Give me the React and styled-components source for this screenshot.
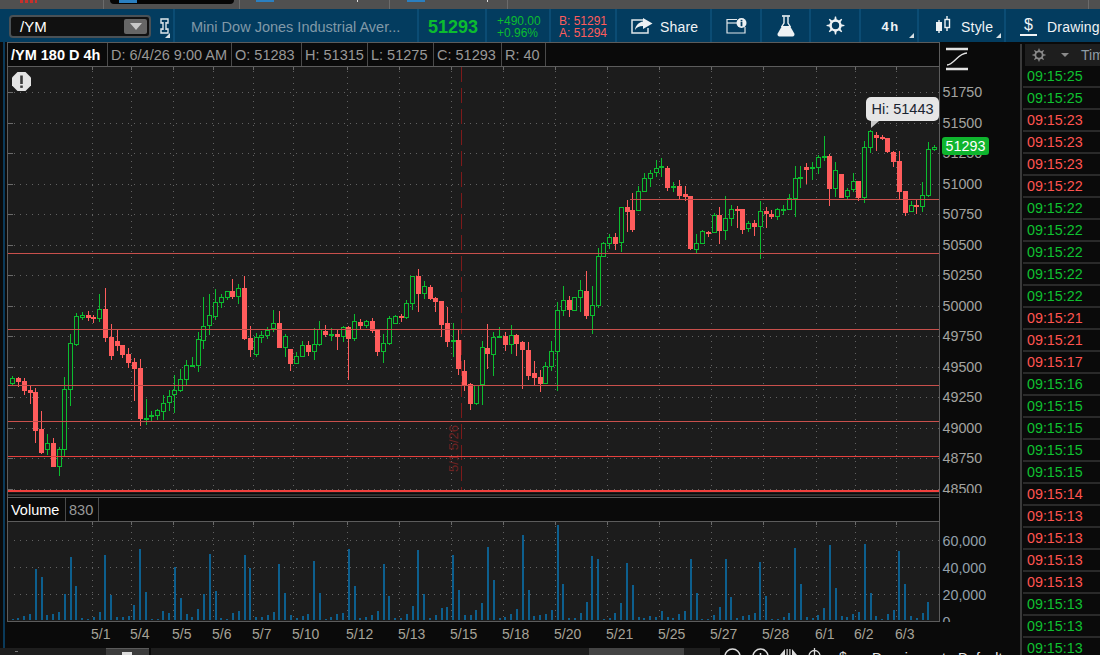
import React from "react";
import styled, { createGlobalStyle } from "styled-components";

const GlobalStyle = createGlobalStyle`
  html, body {
    margin: 0;
    height: 100%;
    background: #0a0a0a;
    overflow: hidden;
  }
  * {
    box-sizing: border-box;
  }
  #root {
    font-family: "Liberation Sans", Arial, sans-serif;
  }
`;

const GREEN = "#0cbc2f";
const RED = "#ff5c5c";
const GRID = "#626262";

// candle rows: [up, bodyTop, bodyBottom, wickTop, wickBottom], read at 3x from the base y
const zoomed = (base, rows) =>
  rows.map(([up, a, b, c, d]) => [up, base + a / 3, base + b / 3, base + c / 3, base + d / 3]);

const candles = [
  ...zoomed(270, [
    [1, 325, 342, 318, 346], [0, 324, 335, 321, 350], [0, 333, 362, 325, 375], [0, 360, 369, 348, 402],
    [0, 366, 483, 354, 519], [0, 477, 549, 423, 552], [1, 520, 540, 492, 555], [0, 519, 591, 504, 591],
    [1, 538, 590, 531, 617], [1, 358, 540, 321, 558], [1, 220, 359, 192, 408], [1, 139, 224, 129, 228],
    [1, 136, 143, 126, 151], [0, 135, 144, 123, 153], [0, 141, 147, 135, 159], [1, 118, 146, 72, 156],
    [0, 117, 204, 54, 216], [0, 201, 258, 162, 270], [0, 213, 228, 180, 243], [0, 225, 255, 225, 264],
    [0, 252, 279, 234, 294], [0, 276, 297, 264, 393], [0, 294, 447, 267, 468], [1, 444, 450, 387, 465],
    [1, 435, 440, 423, 454], [1, 420, 438, 417, 450], [1, 400, 426, 376, 450], [1, 379, 399, 360, 423],
    [1, 360, 376, 315, 429], [1, 328, 363, 297, 366], [1, 286, 330, 270, 345], [1, 286, 290, 262, 292],
    [1, 208, 288, 186, 306], [1, 168, 212, 81, 237], [1, 136, 168, 72, 195], [1, 97, 140, 57, 150],
    [1, 82, 98, 72, 114], [1, 64, 84, 64, 90], [0, 64, 81, 27, 87], [1, 55, 80, 42, 102],
    [0, 54, 207, 18, 210], [0, 204, 240, 168, 261], [1, 202, 255, 189, 261], [1, 196, 204, 183, 219],
    [1, 179, 197, 171, 207], [1, 160, 178, 120, 186], [0, 159, 234, 123, 234], [1, 199, 233, 192, 261],
    [0, 237, 282, 237, 303], [1, 259, 282, 246, 282], [1, 226, 261, 213, 261], [0, 225, 246, 213, 258],
    [1, 223, 246, 174, 270], [1, 177, 225, 153, 228],
  ]),
  ...zoomed(240, [
    [0, 273, 285, 255, 291], [1, 283, 288, 264, 303], [0, 282, 291, 267, 330], [1, 262, 290, 258, 306],
    [0, 261, 297, 258, 420], [1, 244, 297, 222, 303], [0, 246, 258, 237, 270], [1, 244, 258, 240, 264],
    [0, 243, 273, 234, 279], [0, 270, 336, 267, 348], [1, 310, 335, 282, 369], [1, 235, 312, 228, 315],
    [1, 229, 252, 225, 252], [0, 228, 234, 222, 246], [1, 190, 234, 180, 237], [1, 109, 191, 108, 210],
    [0, 108, 162, 87, 216], [1, 138, 162, 123, 177], [0, 141, 178, 135, 180], [0, 174, 186, 171, 216],
    [0, 183, 255, 183, 291], [0, 249, 306, 201, 321], [1, 300, 305, 249, 351], [0, 300, 387, 270, 405],
    [0, 393, 436, 360, 453], [0, 432, 492, 429, 510], [1, 436, 491, 436, 495], [1, 322, 436, 303, 495],
    [0, 324, 342, 252, 387], [1, 292, 345, 276, 408], [1, 289, 293, 261, 294], [0, 288, 315, 276, 333],
    [1, 286, 315, 255, 342], [0, 285, 312, 282, 348], [0, 306, 330, 303, 447], [0, 330, 408, 306, 420],
    [0, 399, 414, 363, 435], [0, 411, 432, 390, 456], [1, 379, 432, 366, 432], [1, 334, 380, 303, 393],
    [1, 211, 335, 186, 453], [1, 181, 213, 138, 228], [0, 180, 210, 168, 231], [1, 172, 213, 172, 213],
    [1, 151, 174, 120, 216], [0, 153, 228, 93, 237], [1, 196, 227, 138, 282], [1, 48, 197, 24, 204],
  ]),
  ...zoomed(100, [
    [1, 430, 470, 425, 472], [1, 412, 431, 403, 447], [0, 411, 431, 400, 450], [1, 322, 430, 322, 456],
    [0, 322, 335, 300, 396], [0, 331, 390, 280, 396], [1, 274, 332, 258, 332], [1, 235, 275, 220, 275],
    [1, 220, 236, 210, 260], [1, 205, 219, 180, 231], [1, 199, 205, 175, 232], [0, 204, 264, 197, 273],
    [1, 258, 262, 245, 275], [0, 258, 288, 240, 296], [0, 282, 291, 258, 303], [0, 288, 446, 288, 450],
    [1, 428, 450, 403, 459], [1, 393, 431, 390, 433], [0, 396, 401, 392, 411], [1, 346, 398, 340, 400],
    [0, 345, 393, 322, 432], [1, 355, 392, 288, 420], [1, 328, 356, 315, 378], [0, 327, 332, 318, 384],
    [0, 327, 390, 327, 402], [1, 370, 386, 364, 396], [0, 369, 381, 360, 408], [1, 334, 380, 303, 477],
    [0, 334, 342, 322, 384], [0, 342, 351, 330, 357], [1, 328, 350, 324, 360], [1, 327, 331, 315, 345],
    [1, 295, 329, 282, 330], [1, 235, 296, 198, 350], [1, 232, 236, 198, 264], [0, 201, 209, 189, 252],
    [1, 202, 206, 186, 240], [1, 172, 203, 165, 222], [1, 169, 174, 108, 183], [0, 168, 267, 162, 318],
    [1, 211, 266, 186, 291], [0, 222, 294, 222, 294], [1, 270, 290, 264, 297], [1, 244, 270, 219, 275],
    [0, 243, 294, 243, 303], [1, 142, 294, 123, 309], [1, 94, 143, 90, 160], [0, 106, 114, 96, 153],
    [0, 112, 116, 105, 120], [0, 114, 156, 114, 160], [0, 156, 186, 153, 201], [0, 183, 276, 153, 297],
    [0, 273, 339, 273, 348], [1, 316, 335, 303, 336], [0, 315, 320, 300, 343], [1, 286, 320, 247, 336],
    [1, 148, 288, 126, 291], [1, 142, 149, 135, 153],
  ]),
];

// volume bar tops, read at 3x, bar foot is at 378
const volumeTops = [
  376, 373, 366, 360, 225, 249, 363, 360, 354, 300, 189, 276, 372, 376, 369, 354, 183, 303, 369, 369,
  366, 333, 165, 294, 375, 375, 351, 357, 219, 312, 360, 369, 345, 300, 180, 291, 372, 375, 357, 351,
  183, 222, 369, 369, 363, 354, 210, 297, 363, 372, 366, 360, 201, 297, 375, 369, 360, 357, 165, 276,
  372, 369, 363, 351, 210, 306, 372, 372, 360, 336, 168, 300, 372, 363, 342, 339, 183, 288, 363, 363,
  348, 327, 159, 258, 372, 369, 360, 345, 123, 288, 366, 363, 360, 348, 93, 270, 372, 372, 357, 324,
  186, 195, 375, 372, 357, 327, 207, 273, 369, 372, 366, 369, 351, 369, 372, 360, 351, 195, 297, 376,
  376, 363, 339, 195, 309, 372, 366, 363, 357, 204, 306, 376, 376, 369, 357, 162, 270, 369, 372, 363,
  342, 153, 282, 366, 369, 360, 354, 150, 297, 366, 376, 360, 348, 171, 270, 366, 372, 357, 324, 377,
];

const candleX = (i) => Math.round(12.2 + i * 5.796);
const volumeX = (i) => Math.round(11.7 + i * 5.796);

const ticks = [
  [92, "5/1"], [131, "5/4"], [173, "5/5"], [213, "5/6"], [253, "5/7"], [293, "5/10"],
  [347, "5/12"], [399, "5/13"], [451, "5/15"], [503, "5/18"], [555, "5/20"], [607, "5/21"],
  [659, "5/25"], [711, "5/27"], [763, "5/28"], [816, "6/1"], [855, "6/2"], [896, "6/3"],
];

const priceLabels = [51750, 51500, 51250, 51000, 50750, 50500, 50250, 50000, 49750, 49500, 49250, 49000, 48750, 48500];

const levels = [
  { y: 199.5, from: 630, color: "#c9504c" },
  { y: 253.5, from: 8, color: "#c9504c" },
  { y: 329.5, from: 8, color: "#c9504c" },
  { y: 385.5, from: 8, color: "#c9504c" },
  { y: 421.5, from: 8, color: "#c9504c" },
  { y: 456.5, from: 8, color: "#e5403d" },
  { y: 491, from: 8, color: "#f0403d", w: 2 },
];

const trades = [
  ["25", 1], ["25", 1], ["23", 0], ["23", 0], ["23", 0], ["22", 0], ["22", 1], ["22", 1], ["22", 1],
  ["22", 1], ["22", 1], ["21", 0], ["21", 0], ["17", 0], ["16", 1], ["15", 1], ["15", 1], ["15", 1],
  ["15", 1], ["14", 0], ["13", 0], ["13", 0], ["13", 0], ["13", 0], ["13", 1], ["13", 1], ["13", 1],
];

const PriceChart = () => (
  <ChartSvg viewBox="8 67 931 426" width="931" height="426">
    <g stroke={GRID} strokeWidth="1" strokeDasharray="1 5" shapeRendering="crispEdges">
      {priceLabels.map((_, i) => {
        const y = Math.round(92 + i * 30.5) + 0.5;
        return <line key={i} x1="14" x2="939" y1={y} y2={y} />;
      })}
      {ticks.map(([x]) => (
        <line key={x} x1={x + 0.5} x2={x + 0.5} y1="71" y2="493" />
      ))}
    </g>
    <g fill="#6a6a6a" shapeRendering="crispEdges">
      {priceLabels.map((_, i) => (
        <rect key={i} x="8" y={Math.round(92 + i * 30.5)} width="5" height="1" />
      ))}
      {ticks.map(([x]) => (
        <rect key={x} x={x} y="67" width="1" height="3" />
      ))}
    </g>

    <line x1="461.5" x2="461.5" y1="67" y2="490" stroke="#7d1a1a" strokeDasharray="15 6" strokeWidth="1" />
    <text
      transform="rotate(-90 458 472)"
      x="458"
      y="472"
      fill="#6e2222"
      fontSize="13"
      fontFamily="Liberation Sans, Arial, sans-serif"
    >
      5/1 5/26
    </text>

    <g shapeRendering="crispEdges">
      {candles.map(([up, top, bottom, wickTop, wickBottom], i) => {
        const x = candleX(i);
        const color = up ? GREEN : RED;
        return (
          <g key={i}>
            <rect x={x} y={wickTop} width="1" height={wickBottom - wickTop} fill={color} />
            {up ? (
              <rect x={x - 1.5} y={top + 0.5} width="4" height={Math.max(bottom - top - 1, 1)} fill="#1c1c1c" stroke={color} />
            ) : (
              <rect x={x - 2} y={top} width="5" height={Math.max(bottom - top, 2)} fill={color} />
            )}
          </g>
        );
      })}
      {levels.map((l) => (
        <line key={l.y} x1={l.from} x2="939" y1={l.y} y2={l.y} stroke={l.color} strokeWidth={l.w || 1} />
      ))}
    </g>

    <polygon points="17.5,72 25.5,72 31,77.5 31,85.5 25.5,91 17.5,91 12,85.5 12,77.5" fill="#e4e4e4" />
    <rect x="20.2" y="75.5" width="2.6" height="8.5" fill="#3a3a3a" />
    <rect x="20.2" y="85.5" width="2.6" height="2.4" fill="#3a3a3a" />
  </ChartSvg>
);

const VolumeChart = () => (
  <ChartSvg viewBox="8 523 931 99" width="931" height="99">
    <g stroke={GRID} strokeWidth="1" strokeDasharray="1 5" shapeRendering="crispEdges">
      {[541, 568, 595].map((y) => (
        <line key={y} x1="14" x2="939" y1={y + 0.5} y2={y + 0.5} />
      ))}
      {ticks.map(([x]) => (
        <line key={x} x1={x + 0.5} x2={x + 0.5} y1="527" y2="622" />
      ))}
    </g>
    <g fill="#6a6a6a" shapeRendering="crispEdges">
      {ticks.map(([x]) => (
        <rect key={x} x={x} y="523" width="1" height="3" />
      ))}
    </g>
    <g fill="#0d5f8e" shapeRendering="crispEdges">
      {volumeTops.map((top, i) => (
        <rect key={i} x={volumeX(i)} y={495 + top / 3} width="2" height={(378 - top) / 3} />
      ))}
    </g>
  </ChartSvg>
);

const DateAxis = () => (
  <ChartSvg viewBox="8 622 931 26" width="931" height="26">
    {ticks.map(([x, label]) => (
      <text key={x} x={x - 1} y="638.5" fill="#a6a398" fontSize="14" fontFamily="Liberation Sans, Arial, sans-serif">
        {label}
      </text>
    ))}
  </ChartSvg>
);

const GearIcon = ({ size = 19, color = "#eef2f4" }) => (
  <svg width={size} height={size} viewBox="0 0 20 20">
    {[0, 45, 90, 135, 180, 225, 270, 315].map((a) => (
      <path key={a} d="M8.4 5.5L9.4 0.6H10.6L11.6 5.5Z" fill={color} transform={`rotate(${a} 10 10)`} />
    ))}
    <circle cx="10" cy="10" r="5.2" fill="none" stroke={color} strokeWidth="2.6" />
  </svg>
);

const App = () => (
  <Page>
    <GlobalStyle />
    <TabStrip>
      <Tab $w={104} $pad={20}>
        <RedMark />
      </Tab>
      <Tab $w={136} $pad={6}>
        <ActiveTab>
          <TabGlyph $w={18} $h={3} />
        </ActiveTab>
      </Tab>
      <Tab $w={150} $pad={16}>
        <TabGlyph $w={18} $h={2} />
        <TabTick $right={31} />
      </Tab>
      <Tab $w={118} $pad={17}>
        <TabGlyph $w={18} $h={2} />
        <TabTick $right={19} />
      </Tab>
      <Tab $w={581} $pad={0} />
    </TabStrip>

    <Toolbar>
      <ToolCell $w={175} $pad={9} $start>
        <SymbolBox>
          /YM
          <SymbolDrop>
            <svg width="12" height="7" viewBox="0 0 12 7">
              <path d="M0 0H12L6 7Z" fill="#c8c8c8" />
            </svg>
          </SymbolDrop>
        </SymbolBox>
        <LinkIcon>
          <svg width="9" height="16" viewBox="0 0 9 16" fill="none" stroke="#dfe6ea" strokeWidth="1.4">
            <path d="M3 5H1V1H8V5H6" />
            <path d="M3 11H1V15H8V11H6" />
            <path d="M3 4V12M6 4V12" />
          </svg>
        </LinkIcon>
        <Corner />
      </ToolCell>
      <ToolCell $w={244} $pad={16} $start>
        <InstrumentName>Mini Dow Jones Industrial Aver...</InstrumentName>
      </ToolCell>
      <ToolCell $w={68} $pad={9} $start>
        <LastPrice>51293</LastPrice>
      </ToolCell>
      <ToolCell $w={64} $pad={10} $start>
        <QuoteLines $color={GREEN}>
          <span>+490.00</span>
          <span>+0.96%</span>
        </QuoteLines>
      </ToolCell>
      <ToolCell $w={66} $pad={8} $start>
        <QuoteLines $color={RED}>
          <span>B: 51291</span>
          <span>A: 51294</span>
        </QuoteLines>
      </ToolCell>
      <ToolCell $w={95} $pad={14} $start>
        <svg width="22" height="16" viewBox="0 0 22 16" fill="none">
          <path d="M12 2H1V15H17V10" stroke="#dfe6ea" strokeWidth="1.5" />
          <path d="M12 0L21.5 5.5L12 11V8C8 8 6 9 4 12C4.5 7.5 8 4 12 3.5Z" fill="#eef2f4" />
        </svg>
        <ToolLabel $gap={7}>Share</ToolLabel>
      </ToolCell>
      <ToolCell $w={50}>
        <svg width="21" height="16" viewBox="0 0 21 16" fill="none">
          <path d="M11 1.5H1V15H19V9" stroke="#dfe6ea" strokeWidth="1.2" />
          <path d="M1 5H11" stroke="#dfe6ea" strokeWidth="1.2" />
          <circle cx="15.5" cy="5" r="5" fill="#eef2f4" />
          <rect x="14.6" y="4" width="1.8" height="4.2" fill="#033c5f" />
          <rect x="14.6" y="1.8" width="1.8" height="1.6" fill="#033c5f" />
        </svg>
      </ToolCell>
      <ToolCell $w={49}>
        <svg width="18" height="22" viewBox="0 0 18 22" fill="none">
          <path d="M5 1H13" stroke="#eef2f4" strokeWidth="1.6" />
          <path d="M7 1.5V8L4.5 12M11 1.5V8L13.5 12" stroke="#eef2f4" strokeWidth="1.4" />
          <path d="M5 11H13L17.3 18.5C18 20 17 21.5 15.5 21.5H2.5C1 21.5 0 20 0.7 18.5Z" fill="#eef2f4" />
        </svg>
      </ToolCell>
      <ToolCell $w={50}>
        <GearIcon />
      </ToolCell>
      <ToolCell $w={58}>
        <Aggregation>4h</Aggregation>
        <Corner />
      </ToolCell>
      <ToolCell $w={87} $pad={17} $start>
        <svg width="15" height="19" viewBox="0 0 15 19" fill="none" stroke="#eef2f4">
          <path d="M3 4V17M11 0V15" strokeWidth="1.4" />
          <rect x="0.5" y="6.5" width="5" height="8" fill="#eef2f4" />
          <rect x="9" y="3.5" width="4.5" height="8" fill="#033c5f" strokeWidth="1.4" />
        </svg>
        <ToolLabel $gap={10}>Style</ToolLabel>
        <Corner />
      </ToolCell>
      <ToolCell $w={94} $pad={14} $start $last>
        <DollarLine>$</DollarLine>
        <ToolLabel $gap={10}>Drawings</ToolLabel>
      </ToolCell>
    </Toolbar>

    <Workspace>
      <MainColumn>
        <ChartRow>
          <Rail />
          <ChartColumn>
            <StudyHeader>
              <HeaderCell $w={100} $bright>/YM 180 D 4h</HeaderCell>
              <HeaderCell $w={124}>D: 6/4/26 9:00 AM</HeaderCell>
              <HeaderCell $w={70}>O: 51283</HeaderCell>
              <HeaderCell $w={66}>H: 51315</HeaderCell>
              <HeaderCell $w={66}>L: 51275</HeaderCell>
              <HeaderCell $w={68}>C: 51293</HeaderCell>
              <HeaderCell $w={44}>R: 40</HeaderCell>
            </StudyHeader>
            <PricePane>
              <PriceChart />
              <HighTip>Hi: 51443</HighTip>
            </PricePane>
            <PaneGap />
            <VolumeHeader>
              <VolumeCell $w={58} $bright>Volume</VolumeCell>
              <VolumeCell $w={33}>830</VolumeCell>
            </VolumeHeader>
            <VolumePane>
              <VolumeChart />
            </VolumePane>
            <DateRow>
              <DateAxis />
            </DateRow>
          </ChartColumn>
          <AxisColumn>
            <PriceAxis>
              <StudyButton>
                <svg width="22" height="24" viewBox="0 0 22 24" fill="none" stroke="#e2e2e2">
                  <path d="M0 2H22M0 22H22" strokeWidth="2.4" />
                  <path d="M1 18C8 18 12 6 21 6" strokeWidth="1.3" />
                </svg>
              </StudyButton>
              {priceLabels.map((p) => (
                <AxisLabel key={p} $h={30.5}>{p}</AxisLabel>
              ))}
              <PriceTag>51293</PriceTag>
            </PriceAxis>
            <VolumeAxis>
              {["60,000", "40,000", "20,000", "0"].map((v) => (
                <AxisLabel key={v} $h={27} $cool>{v}</AxisLabel>
              ))}
            </VolumeAxis>
          </AxisColumn>
        </ChartRow>
        <BottomBar>
          <Track $w={106}>
            <TrackMark />
          </Track>
          <ScrollButton>
            <ScrollButtonMark />
          </ScrollButton>
          <Track $w={438} />
          <ScrollThumb />
          <Track $w={36} />
          <BottomTools>
            <CircleTool $w={28}>
              <svg width="17" height="17" viewBox="0 0 17 17" fill="none" stroke="#dcdcdc" strokeWidth="1.5">
                <circle cx="8.5" cy="8.5" r="7.5" />
                <path d="M5 8.5H12" />
              </svg>
            </CircleTool>
            <CircleTool $w={28}>
              <svg width="17" height="17" viewBox="0 0 17 17" fill="none" stroke="#dcdcdc" strokeWidth="1.5">
                <circle cx="8.5" cy="8.5" r="7.5" />
                <path d="M5 8.5H12M8.5 5V12" />
              </svg>
            </CircleTool>
            <CircleTool $w={27}>
              <svg width="17" height="15" viewBox="0 0 17 15" fill="#dcdcdc">
                <path d="M0 7L5 1V13ZM17 7L12 1V13Z" />
                <rect x="6.5" y="1" width="1.2" height="12" />
                <rect x="9.3" y="1" width="1.2" height="12" />
              </svg>
            </CircleTool>
            <CircleTool $w={27}>
              <svg width="15" height="15" viewBox="0 0 15 15" fill="none" stroke="#dcdcdc" strokeWidth="1.3">
                <circle cx="7.5" cy="8" r="5.5" />
                <path d="M7.5 0V15M0 8H15" />
              </svg>
            </CircleTool>
            <BottomDollar>$</BottomDollar>
            <BottomText $w={86}>Drawing set:</BottomText>
            <BottomText $w={50}>Default</BottomText>
          </BottomTools>
        </BottomBar>
      </MainColumn>
      <TimeSales>
        <SalesHeader>
          <GearIcon size={14} color="#8a8a8a" />
          <SalesCaret />
          <SalesTitle>Time</SalesTitle>
        </SalesHeader>
        {trades.map(([sec, up], i) => (
          <SalesRow key={i} $up={up}>09:15:{sec}</SalesRow>
        ))}
      </TimeSales>
    </Workspace>
  </Page>
);

export default App;

const Page = styled.div`
  width: 1100px;
  height: 655px;
  display: flex;
  flex-direction: column;
  overflow: hidden;
  background: #0a0a0a;
`;

const TabStrip = styled.div`
  height: 9px;
  flex: none;
  display: flex;
  background: #505050;
`;

const Tab = styled.div`
  width: ${(p) => p.$w}px;
  padding-left: ${(p) => p.$pad}px;
  border-right: 1px solid #6b6b6b;
  display: flex;
  align-items: flex-start;
  position: relative;
`;

const RedMark = styled.div`
  width: 17px;
  height: 3px;
  background: repeating-linear-gradient(90deg, #c8302c 0 3px, #505050 3px 5px);
`;

const ActiveTab = styled.div`
  width: 124px;
  height: 4px;
  padding-left: 9px;
  background: #050505;
  border-radius: 0 0 5px 5px;
`;

const TabGlyph = styled.div`
  width: ${(p) => p.$w}px;
  height: ${(p) => p.$h}px;
  background: #2a7fc0;
`;

const TabTick = styled.div`
  position: absolute;
  top: 0;
  right: ${(p) => p.$right}px;
  width: 1px;
  height: 2px;
  background: #e0e0e0;
`;

const Toolbar = styled.div`
  height: 33px;
  flex: none;
  display: flex;
  background: #033c5f;
`;

const ToolCell = styled.div`
  width: ${(p) => p.$w}px;
  flex: none;
  padding-left: ${(p) => p.$pad || 0}px;
  display: flex;
  align-items: center;
  justify-content: ${(p) => (p.$start ? "flex-start" : "center")};
  border-right: ${(p) => (p.$last ? "none" : "2px solid #0b4c74")};
  position: relative;
  overflow: hidden;
  white-space: nowrap;
`;

const SymbolBox = styled.div`
  width: 142px;
  height: 23px;
  margin-top: 2px;
  padding-left: 9px;
  display: flex;
  flex: none;
  align-items: center;
  justify-content: space-between;
  background: #111;
  border: 2px solid #4a5156;
  border-radius: 4px;
  color: #fff;
  font-size: 15px;
`;

const SymbolDrop = styled.div`
  width: 23px;
  height: 15px;
  margin-right: 2px;
  display: flex;
  align-items: center;
  justify-content: center;
  background: #666;
  border-radius: 2px;
`;

const LinkIcon = styled.div`
  margin-left: 9px;
  display: flex;
  flex: none;
`;

const Corner = styled.div`
  position: absolute;
  right: 3px;
  bottom: 4px;
  width: 5px;
  height: 5px;
  background: #d8e0e4;
  clip-path: polygon(100% 0, 100% 100%, 0 100%);
`;

const InstrumentName = styled.span`
  margin-top: 2px;
  color: #8199a8;
  font-size: 14.5px;
`;

const LastPrice = styled.span`
  margin-top: 3px;
  color: ${GREEN};
  font-size: 18px;
  font-weight: bold;
`;

const QuoteLines = styled.div`
  margin-top: 2px;
  display: flex;
  flex-direction: column;
  color: ${(p) => p.$color};
  font-size: 12px;
  line-height: 12px;
`;

const ToolLabel = styled.span`
  margin-top: 2px;
  margin-left: ${(p) => p.$gap}px;
  color: #f0f3f5;
  font-size: 14px;
  letter-spacing: 0.2px;
`;

const Aggregation = styled.span`
  margin: 2px 0 0 3px;
  color: #f0f3f5;
  font-size: 13px;
  font-weight: bold;
  letter-spacing: 1.5px;
`;

const DollarLine = styled.span`
  width: 17px;
  height: 20px;
  flex: none;
  text-align: center;
  color: #f0f3f5;
  font-size: 16px;
  line-height: 17px;
  border-bottom: 2px solid #f0f3f5;
`;

const Workspace = styled.div`
  flex: 1;
  display: flex;
  min-height: 0;
`;

const MainColumn = styled.div`
  width: 1020px;
  flex: none;
  display: flex;
  flex-direction: column;
`;

const ChartRow = styled.div`
  height: 606px;
  flex: none;
  display: flex;
`;

const Rail = styled.div`
  width: 7px;
  flex: none;
  background: linear-gradient(90deg, #0a0a0a 0 3px, #0a3a5a 3px 5px, #0a0a0a 5px);
`;

const ChartColumn = styled.div`
  width: 933px;
  flex: none;
  display: flex;
  flex-direction: column;
  border-left: 1px solid #5c5c5c;
  border-right: 1px solid #5c5c5c;
`;

const StudyHeader = styled.div`
  height: 25px;
  flex: none;
  display: flex;
  background: #0a0a0a;
  border-top: 1px solid #5c5c5c;
  border-bottom: 1px solid #5c5c5c;
`;

const HeaderCell = styled.div`
  width: ${(p) => p.$w}px;
  flex: none;
  padding-left: 3px;
  display: flex;
  align-items: center;
  border-right: 1px solid #4a4a4a;
  color: ${(p) => (p.$bright ? "#fff" : "#989898")};
  font-size: 14.5px;
  font-weight: ${(p) => (p.$bright ? "bold" : "normal")};
  white-space: nowrap;
`;

const PricePane = styled.div`
  height: 426px;
  flex: none;
  position: relative;
  background: #1c1c1c;
  overflow: hidden;
`;

const ChartSvg = styled.svg`
  display: block;
`;

const HighTip = styled.div`
  position: absolute;
  left: 858px;
  top: 30px;
  width: 73px;
  height: 24px;
  display: flex;
  align-items: center;
  justify-content: center;
  background: #e6e6e6;
  border-radius: 5px;
  color: #1a2430;
  font-size: 14.5px;

  &::after {
    content: "";
    position: absolute;
    left: 5px;
    top: 24px;
    width: 8px;
    height: 7px;
    background: #c8c8c8;
    clip-path: polygon(0 0, 100% 0, 0 100%);
  }
`;

const PaneGap = styled.div`
  height: 5px;
  flex: none;
  background: linear-gradient(180deg, #0a0a0a 0 1px, #2e2e2e 1px 3px, #0a0a0a 3px);
  border-bottom: 1px solid #5c5c5c;
`;

const VolumeHeader = styled.div`
  height: 24px;
  flex: none;
  display: flex;
  background: #0a0a0a;
  border-bottom: 1px solid #5c5c5c;
`;

const VolumeCell = styled.div`
  width: ${(p) => p.$w}px;
  flex: none;
  padding-left: 3px;
  display: flex;
  align-items: center;
  border-right: 1px solid #4a4a4a;
  color: ${(p) => (p.$bright ? "#fff" : "#989898")};
  font-size: 14.5px;
`;

const VolumePane = styled.div`
  height: 100px;
  flex: none;
  background: #1c1c1c;
  border-bottom: 1px solid #5c5c5c;
  overflow: hidden;
`;

const DateRow = styled.div`
  height: 26px;
  flex: none;
  margin: 0 -1px;
  padding-left: 1px;
  background: #0a0a0a;
`;

const AxisColumn = styled.div`
  width: 80px;
  flex: none;
  display: flex;
  flex-direction: column;
  background: #0a0a0a;
`;

const PriceAxis = styled.div`
  height: 451px;
  flex: none;
  position: relative;
  overflow: hidden;
`;

const StudyButton = styled.div`
  height: 34.75px;
  padding: 5px 0 0 6px;
  display: flex;
  align-items: flex-start;
`;

const AxisLabel = styled.div`
  height: ${(p) => p.$h}px;
  padding-left: 2.5px;
  display: flex;
  align-items: center;
  color: ${(p) => (p.$cool ? "#93a0aa" : "#a3a3a0")};
  font-size: 14.3px;
`;

const PriceTag = styled.div`
  position: absolute;
  left: 2px;
  top: 95px;
  width: 47px;
  height: 18px;
  display: flex;
  align-items: center;
  justify-content: center;
  background: #0fb52e;
  border-radius: 3px;
  color: #fff;
  font-size: 14.3px;
`;

const VolumeAxis = styled.div`
  height: 129px;
  flex: none;
  padding-top: 34.5px;
  overflow: hidden;
`;

const BottomBar = styled.div`
  height: 7px;
  flex: none;
  display: flex;
  align-items: flex-start;
  overflow: hidden;
`;

const Track = styled.div`
  width: ${(p) => p.$w}px;
  height: 7px;
  flex: none;
  padding: 3px 0 0 15px;
  background: #1e1e1e;
`;

const TrackMark = styled.div`
  width: 3px;
  height: 1px;
  background: #777;
`;

const ScrollButton = styled.div`
  width: 43px;
  height: 7px;
  margin: 0 2px 0 0;
  flex: none;
  padding: 3px 0 0 16px;
  background: #3c3c3c;
  border-top: 1px solid #5a5a5a;
`;

const ScrollButtonMark = styled.div`
  width: 10px;
  height: 3px;
  background: #ddd;
`;

const ScrollThumb = styled.div`
  width: 95px;
  height: 7px;
  flex: none;
  background: #444;
`;

const BottomTools = styled.div`
  margin-left: 4px;
  flex: none;
  display: flex;
  align-items: flex-start;
`;

const CircleTool = styled.div`
  width: ${(p) => p.$w}px;
  height: 17px;
  flex: none;
  display: flex;
  justify-content: flex-start;
`;

const BottomDollar = styled.span`
  width: 38px;
  padding: 1px 0 0 5px;
  color: #dcdcdc;
  font-size: 14px;
  line-height: 16px;
`;

const BottomText = styled.span`
  width: ${(p) => p.$w}px;
  flex: none;
  padding-top: 2px;
  color: #e6e6e6;
  font-size: 14px;
  line-height: 16px;
  white-space: nowrap;
`;

const TimeSales = styled.div`
  flex: 1;
  margin-top: 2px;
  padding-left: 1px;
  border-left: 2px solid #3a3a3a;
  overflow: hidden;
  background: #0a0a0a;
`;

const SalesHeader = styled.div`
  height: 22px;
  margin-left: 2px;
  padding-left: 7px;
  display: flex;
  align-items: center;
  background: #1e1e1e;
  white-space: nowrap;
  overflow: hidden;

  & > * {
    flex: none;
  }
`;

const SalesCaret = styled.div`
  margin-left: 15px;
  width: 8px;
  height: 4px;
  background: #8a8a8a;
  clip-path: polygon(0 0, 100% 0, 50% 100%);
`;

const SalesTitle = styled.span`
  margin-left: 12px;
  color: #8f9ca6;
  font-size: 14px;
`;

const SalesRow = styled.div`
  height: 22px;
  padding-left: 4px;
  display: flex;
  align-items: center;
  color: ${(p) => (p.$up ? "#0fc030" : "#ff5450")};
  font-size: 14.3px;
  border-bottom: 2px solid #2a2a2a;
  white-space: nowrap;
`;
